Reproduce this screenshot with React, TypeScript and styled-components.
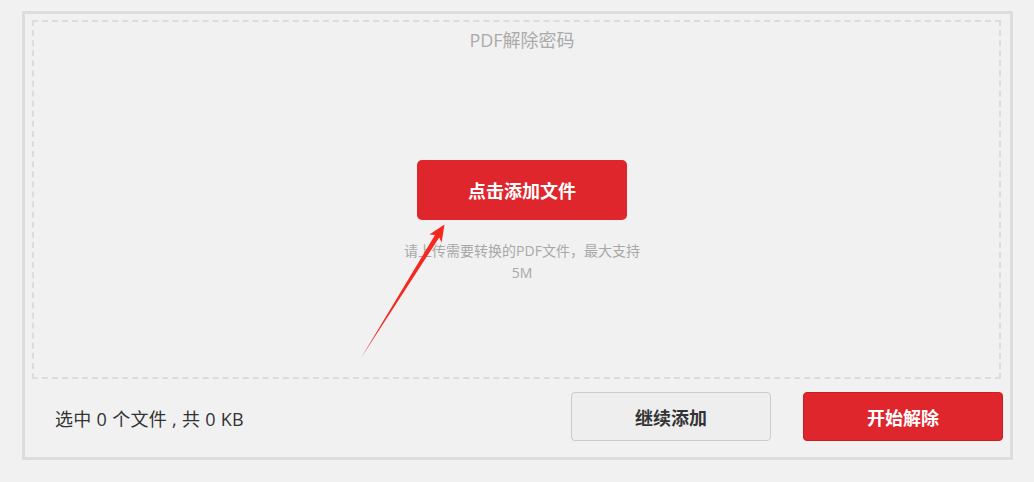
import styled, { createGlobalStyle } from 'styled-components';

const GlobalStyle = createGlobalStyle`
	body {
		margin: 0;
		background: #f1f1f1;
		font-family: 'Microsoft YaHei', 'Open Sans', 'Noto Sans CJK SC', sans-serif;
	}
`;

const Panel = styled.div`
	box-sizing: border-box;
	width: 991px;
	height: 449px;
	margin: 11px 0 0 22px;
	border: 3px solid #dddddd;
	padding: 6px 7px 0 7px;
	display: flex;
	flex-direction: column;
`;

const DropZone = styled.div`
	position: relative;
	box-sizing: border-box;
	width: calc(100% - 2px);
	height: 359px;
	border: 2px dashed #dcdcdc;
	padding: 6px 0 0 11px;
	display: flex;
	flex-direction: column;
	align-items: center;
`;

const Title = styled.div`
	font-size: 18px;
	line-height: 24px;
	color: #aaaaaa;
`;

const UploadButton = styled.button`
	margin-top: 108px;
	width: 210px;
	height: 60px;
	border: none;
	border-radius: 5px;
	background: #e0262d;
	color: #fff;
	font-family: inherit;
	font-size: 18px;
	font-weight: bold;
	cursor: pointer;
`;

const Hint = styled.p`
	margin: 20px 0 0;
	width: 242px;
	font-size: 14px;
	line-height: 22px;
	color: #a8a8a8;
	text-align: center;
`;

const Arrow = styled.svg`
	position: absolute;
	inset: 0;
	width: 100%;
	height: 100%;
	pointer-events: none;
`;

const Footer = styled.div`
	flex: 1;
	display: flex;
	align-items: flex-start;
	padding: 13px 0 0 23px;
`;

const Summary = styled.span`
	flex: 1;
	padding-top: 3px;
	font-size: 18px;
	letter-spacing: 0.3px;
	line-height: 49px;
	color: #333;
`;

const ActionButton = styled.button<{ $primary?: boolean }>`
	box-sizing: border-box;
	width: 200px;
	height: 49px;
	margin-left: 32px;
	border-radius: 4px;
	border: 1px solid ${(p) => (p.$primary ? '#c81e24' : '#cccccc')};
	background: ${(p) => (p.$primary ? '#e0262d' : '#eeeeee')};
	color: ${(p) => (p.$primary ? '#fff' : '#333')};
	font-family: inherit;
	font-size: 18px;
	font-weight: bold;
	cursor: pointer;
`;

export default function App() {
	return (
		<>
			<GlobalStyle />
			<Panel>
				<DropZone>
					<Title>PDF解除密码</Title>
					<UploadButton>点击添加文件</UploadButton>
					<Hint>请上传需要转换的PDF文件，最大支持5M</Hint>
					<Arrow viewBox="34 22 965 355" preserveAspectRatio="none">
						<polygon
							points="361,358 435,235 429.4,234.6 444.5,224.5 441.6,242.5 439.2,237.5"
							fill="#f5281f"
						/>
					</Arrow>
				</DropZone>
				<Footer>
					<Summary>选中 0 个文件 , 共 0 KB</Summary>
					<ActionButton>继续添加</ActionButton>
					<ActionButton $primary>开始解除</ActionButton>
				</Footer>
			</Panel>
		</>
	);
}
